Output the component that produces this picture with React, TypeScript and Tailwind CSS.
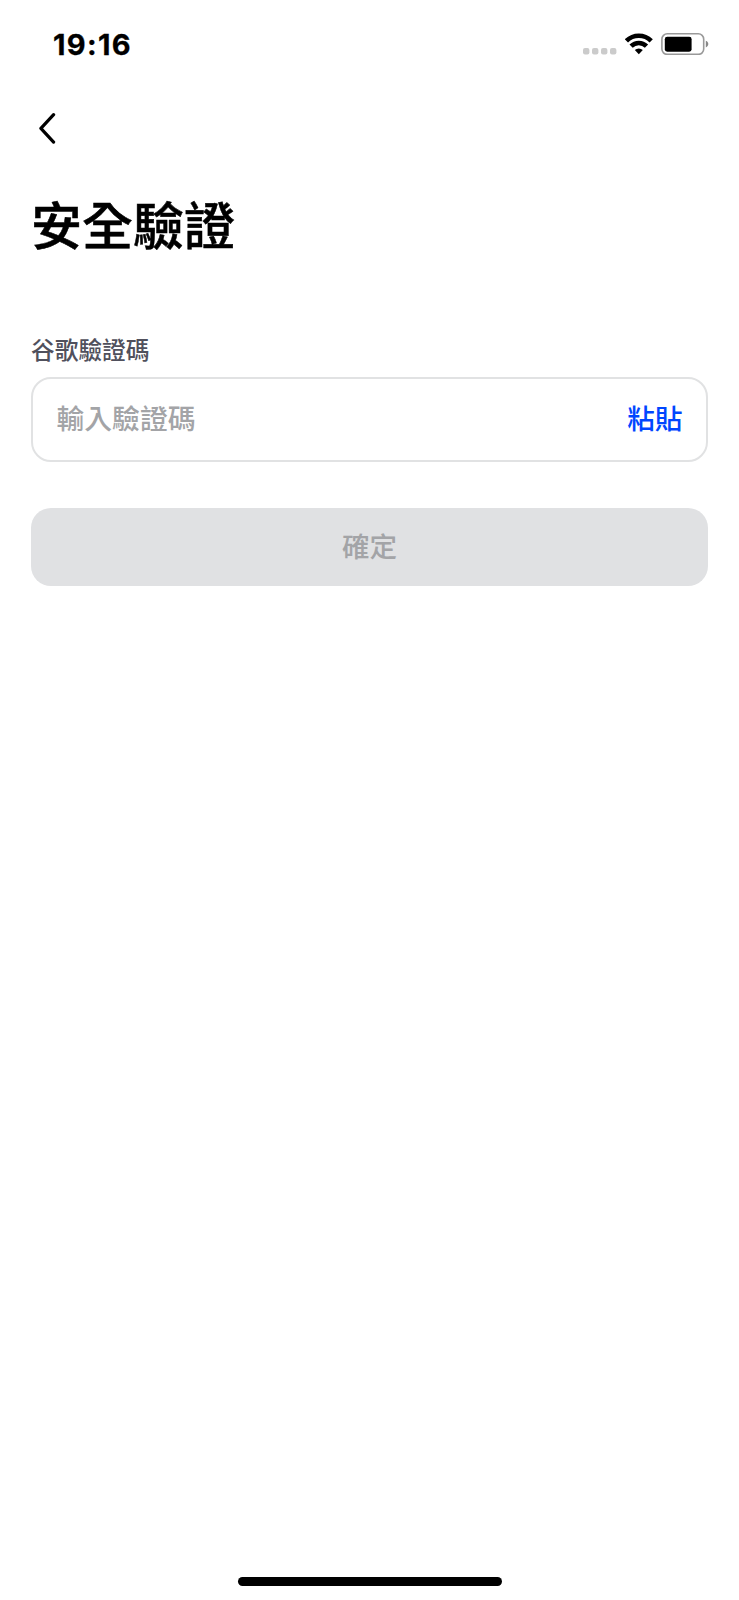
function SignalDots() {
  return (
    <svg className="h-[7px] w-[34px]" viewBox="0 0 34 7" fill="#cbcbcb">
      <rect x="0" y="0" width="6.4" height="6.6" rx="2" />
      <rect x="9" y="0" width="6.4" height="6.6" rx="2" />
      <rect x="18" y="0" width="6.4" height="6.6" rx="2" />
      <rect x="27" y="0" width="6.4" height="6.6" rx="2" />
    </svg>
  );
}

function WifiIcon() {
  return (
    <svg className="h-[22px] w-[28px]" viewBox="0 0 28 22">
      <g fill="none" stroke="#000" strokeWidth="4.6">
        <path d="M1.4 7.8a17.6 17.6 0 0 1 24.8 0" />
        <path d="M6.1 13.2a10.9 10.9 0 0 1 15.4 0" />
      </g>
      <path d="M13.8 21.2l-4-4.1a6 6 0 0 1 8 0z" fill="#000" />
    </svg>
  );
}

function BatteryIcon() {
  return (
    <svg className="h-[22px] w-[48px]" viewBox="0 0 48 22">
      <rect x="0.9" y="0.8" width="41.8" height="20.6" rx="5.4" fill="none" stroke="#999" strokeWidth="1.6" />
      <rect x="3.8" y="3.8" width="26.8" height="14.9" rx="2.4" fill="#000" />
      <path d="M44.8 7.7c1.6.6 2.5 1.9 2.5 3.4s-.9 2.8-2.5 3.4z" fill="#888" />
    </svg>
  );
}

export default function App() {
  return (
    <div className="flex h-[1600px] w-full flex-col bg-white font-['Inter','Noto_Sans_CJK_TC',sans-serif] text-black">
      <div className="flex h-[88px] items-center justify-between pr-[30px] pl-[53px]">
        <span className="mt-0.5 text-[29px] leading-[34px] font-bold tracking-[1.3px] [-webkit-text-stroke:0.3px_#000]">
          19:16
        </span>
        <div className="flex items-end">
          <SignalDots />
          <div className="ml-2 flex">
            <WifiIcon />
          </div>
          <div className="ml-2">
            <BatteryIcon />
          </div>
        </div>
      </div>

      <header className="flex h-20 items-center px-[31px]">
        <button type="button" aria-label="返回">
          <svg className="h-8 w-8" viewBox="0 0 32 32" fill="none" stroke="#000" strokeWidth="3.2">
            <path d="M22.6 2.7L9.9 16.4l12.7 13.7" strokeLinecap="round" strokeLinejoin="round" />
          </svg>
        </button>
      </header>

      <main className="flex flex-col px-[31px]">
        <h1 className="mt-[23px] text-[51px] leading-[72px] font-medium [-webkit-text-stroke:0.5px_#000]">
          安全驗證
        </h1>
        <label className="mt-[71px] text-[23.7px] leading-[34px] font-medium text-[#50505c]">谷歌驗證碼</label>
        <div className="mt-[9px] flex h-[85px] items-center justify-between rounded-[20px] border-2 border-[#e1e2e3] pr-[23.5px] pb-px pl-[23.5px] text-[27.8px] leading-10 font-medium">
          <span className="text-[#a3a4a7]">輸入驗證碼</span>
          <button type="button" className="text-[#0046ff]">粘貼</button>
        </div>
        <button
          type="button"
          className="mt-[46px] h-[78px] rounded-[20px] bg-[#e0e1e3] pt-0.5 text-[27.6px] font-medium text-[#a3a4a7]"
        >
          確定
        </button>
      </main>

      <div className="mx-auto mt-auto mb-[14px] h-[9px] w-[264px] rounded-full bg-black" />
    </div>
  );
}
